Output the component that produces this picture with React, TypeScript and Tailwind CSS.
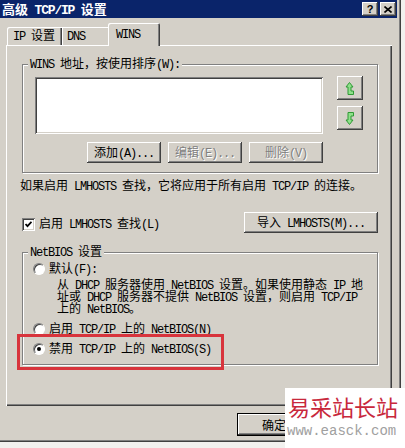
import React from "react";

const RAISED =
  "shadow-[inset_-1px_-1px_#404040,inset_1px_1px_#ffffff,inset_-2px_-2px_#808080]";
const SUNKEN =
  "shadow-[inset_1px_1px_#808080,inset_-1px_-1px_#ffffff,inset_2px_2px_#404040,inset_-2px_-2px_#d4d0c8]";

// SimSun-like half-width ASCII: Liberation Mono squeezed to 6px per char
function Tx({ s }: { s: string }) {
  const parts = s.split(/([\x20-\x7e]+)/);
  return (
    <>
      {parts.map((p, i) =>
        /[\x20-\x7e]/.test(p) ? (
          <span
            key={i}
            className="font-['Liberation_Mono',monospace] tracking-[-1.2px] whitespace-pre leading-none"
          >
            {p}
          </span>
        ) : (
          <React.Fragment key={i}>{p}</React.Fragment>
        )
      )}
    </>
  );
}

function Line({ s, className = "" }: { s: string; className?: string }) {
  return (
    <div className={`h-[12px] flex items-center whitespace-nowrap text-[12px] leading-none ${className}`}>
      <span>
        <Tx s={s} />
      </span>
    </div>
  );
}

function Button({
  label,
  disabled,
  className = "",
}: {
  label: string;
  disabled?: boolean;
  className?: string;
}) {
  return (
    <div
      className={`flex items-center justify-center h-[21px] bg-[#d4d0c8] text-[12px] leading-none whitespace-nowrap ${RAISED} ${
        disabled ? "text-[#808080] [text-shadow:1px_1px_0_#ffffff]" : "text-black"
      } ${className}`}
    >
      <span>
        <Tx s={label} />
      </span>
    </div>
  );
}

function GroupBox({
  label,
  className = "",
  children,
}: {
  label: string;
  className?: string;
  children: React.ReactNode;
}) {
  return (
    <div
      className={`relative border border-[#808080] shadow-[inset_1px_1px_#ffffff,1px_1px_#ffffff] ${className}`}
    >
      {/* label sits over the etched top line */}
      <div className="absolute left-[5px] top-[-7px] h-[12px] flex items-center bg-[#d4d0c8] px-[2px] text-[12px] leading-none whitespace-nowrap">
        <span>
          <Tx s={label} />
        </span>
      </div>
      {children}
    </div>
  );
}

function Radio({ checked }: { checked?: boolean }) {
  return (
    <div className="relative w-[12px] h-[12px] rounded-full bg-white border border-t-[#808080] border-l-[#808080] border-b-[#ffffff] border-r-[#ffffff] shadow-[inset_1px_1px_#404040] flex items-center justify-center shrink-0">
      {checked && <div className="w-[4px] h-[4px] rounded-full bg-black" />}
    </div>
  );
}

function ArrowIcon({ down }: { down?: boolean }) {
  return (
    <svg
      width="10"
      height="15"
      viewBox="0 0 10 15"
      className={down ? "-scale-y-100" : ""}
    >
      <path
        d="M1 6 L4.5 1.5 L8 6 L6 6 L6 10 L8.5 10 L8.5 13.5 L3 13.5 L3 6 Z"
        fill="#8ee08a"
        stroke="#2f9a35"
        strokeWidth="1"
        strokeLinejoin="round"
      />
    </svg>
  );
}

export default function App() {
  return (
    <div className="relative w-[405px] h-[448px] overflow-hidden bg-[#f2f1ef] font-['Noto_Sans_CJK_SC',sans-serif] text-black">
      {/* dialog window */}
      <div className="w-[401px] h-[442px] bg-[#d4d0c8] shadow-[inset_-1px_-1px_#404040,inset_-2px_-2px_#808080]">
        {/* title bar */}
        <div className="w-[397px] h-[18px] bg-[#0a246a] flex items-center justify-between pl-[2px] pr-[1px]">
          <div className="h-[16px] flex items-center text-white font-bold text-[13px] leading-none whitespace-nowrap">
            <span>
              <Tx s="高级 TCP/IP 设置" />
            </span>
          </div>
          <div className="flex gap-[2px]">
            <div
              className={`w-[16px] h-[14px] bg-[#d4d0c8] ${RAISED} flex items-center justify-center text-[11px] font-bold leading-none font-['Liberation_Sans',sans-serif]`}
            >
              ?
            </div>
            <div
              className={`w-[16px] h-[14px] bg-[#d4d0c8] ${RAISED} flex items-center justify-center`}
            >
              <svg width="8" height="7" viewBox="0 0 8 7">
                <path d="M0.5 0.5 L7.5 6.5 M7.5 0.5 L0.5 6.5" stroke="#000" strokeWidth="1.6" />
              </svg>
            </div>
          </div>
        </div>

        {/* tabs */}
        <div className="mt-[5px] ml-[7px] flex items-end h-[22px]">
          <div className="w-[55px] h-[18px] flex items-center pl-[6px] text-[12px] leading-none whitespace-nowrap shadow-[inset_1px_1px_#ffffff,inset_-1px_0_#404040,inset_-2px_0_#808080] rounded-tl-[2px]">
            <span>
              <Tx s="IP 设置" />
            </span>
          </div>
          <div className="w-[47px] h-[18px] flex items-center pl-[5px] text-[12px] leading-none shadow-[inset_1px_1px_#ffffff]">
            <span>
              <Tx s="DNS" />
            </span>
          </div>
          <div className="relative z-10 -ml-[1px] -mb-[1px] w-[52px] h-[23px] bg-[#d4d0c8] flex items-center pl-[8px] pb-[2px] text-[12px] leading-none shadow-[inset_1px_1px_#ffffff,inset_-1px_0_#404040,inset_-2px_0_#808080] rounded-t-[2px]">
            <span>
              <Tx s="WINS" />
            </span>
          </div>
        </div>

        {/* tab panel */}
        <div className="ml-[6px] w-[386px] h-[361px] shadow-[inset_1px_1px_#ffffff,inset_-1px_-1px_#404040,inset_-2px_-2px_#808080] pt-[19px]">
          <GroupBox label="WINS 地址，按使用排序(W):" className="ml-[16px] w-[356px] h-[109px]">
            <div className="pl-[12px] pt-[12px]">
              <div className="flex items-start">
                <div className={`w-[288px] h-[57px] bg-white ${SUNKEN}`} />
                <div className="ml-[14px] -mt-[1px] flex flex-col gap-[6px]">
                  <div className={`w-[26px] h-[24px] bg-[#d4d0c8] ${RAISED} flex items-center justify-center`}>
                    <ArrowIcon />
                  </div>
                  <div className={`w-[26px] h-[24px] bg-[#d4d0c8] ${RAISED} flex items-center justify-center`}>
                    <ArrowIcon down />
                  </div>
                </div>
              </div>
              <div className="mt-[8px] ml-[52px] flex gap-[7px]">
                <Button label="添加(A)..." className="w-[74px]" />
                <Button label="编辑(E)..." disabled className="w-[74px]" />
                <Button label="删除(V)" disabled className="w-[74px]" />
              </div>
            </div>
          </GroupBox>

          <Line
            s="如果启用 LMHOSTS 查找，它将应用于所有启用 TCP/IP 的连接。"
            className="mt-[7px] ml-[14px]"
          />

          <div className="mt-[20px] ml-[16px] w-[356px] h-[21px] flex items-center justify-between">
            <div className="flex items-center gap-[4px] pt-[3px]">
              <div className={`w-[13px] h-[13px] bg-white ${SUNKEN} flex items-center justify-center`}>
                <svg width="7" height="7" viewBox="0 0 7 7">
                  <path d="M0.5 3 L2.5 5.2 L6.5 0.8" stroke="#000" strokeWidth="1.8" fill="none" />
                </svg>
              </div>
              <Line s="启用 LMHOSTS 查找(L)" />
            </div>
            <Button label="导入 LMHOSTS(M)..." className="w-[134px]" />
          </div>

          <GroupBox label="NetBIOS 设置" className="mt-[19px] ml-[16px] w-[356px] h-[113px]">
            <div className="pl-[10px] pt-[9px]">
              <div className="h-[14px] flex items-center gap-[4px]">
                <Radio />
                <Line s="默认(F):" />
              </div>
              <div className="mt-[3px] ml-[24px]">
                <Line s="从 DHCP 服务器使用 NetBIOS 设置。如果使用静态 IP 地" />
                <Line s="址或 DHCP 服务器不提供 NetBIOS 设置，则启用 TCP/IP" />
                <Line s="上的 NetBIOS。" />
              </div>
              <div className="mt-[7px] h-[14px] flex items-center gap-[4px]">
                <Radio />
                <Line s="启用 TCP/IP 上的 NetBIOS(N)" />
              </div>
              <div className="mt-[6px] h-[14px] flex items-center gap-[4px]">
                <Radio checked />
                <Line s="禁用 TCP/IP 上的 NetBIOS(S)" />
              </div>
            </div>
          </GroupBox>
        </div>

        {/* dialog button (the rest is covered by the watermark) */}
        <div className="mt-[7px] ml-[237px] flex">
          <div className="border border-black">
            <Button label="确定" className="w-[72px] h-[19px]" />
          </div>
        </div>
      </div>

      {/* red highlight drawn over the selected option */}
      <div className="absolute left-[17px] top-[334px] w-[207px] h-[36px] border-[3px] border-[#d8343c]" />

      {/* watermark */}
      <div className="absolute left-[285px] top-[388px] w-[120px] h-[60px] bg-white">
        <div className="mt-[6px] ml-[3px] text-[22px] leading-[24px] text-[#c8283c] font-['Noto_Sans_CJK_SC',serif] whitespace-nowrap">
          易采站长站
        </div>
        <div className="mt-[6px] ml-[2px] text-[14px] leading-[14px] text-[#a0a0a0] font-['Liberation_Mono',monospace] whitespace-nowrap">
          www.easck.com
        </div>
      </div>
    </div>
  );
}
